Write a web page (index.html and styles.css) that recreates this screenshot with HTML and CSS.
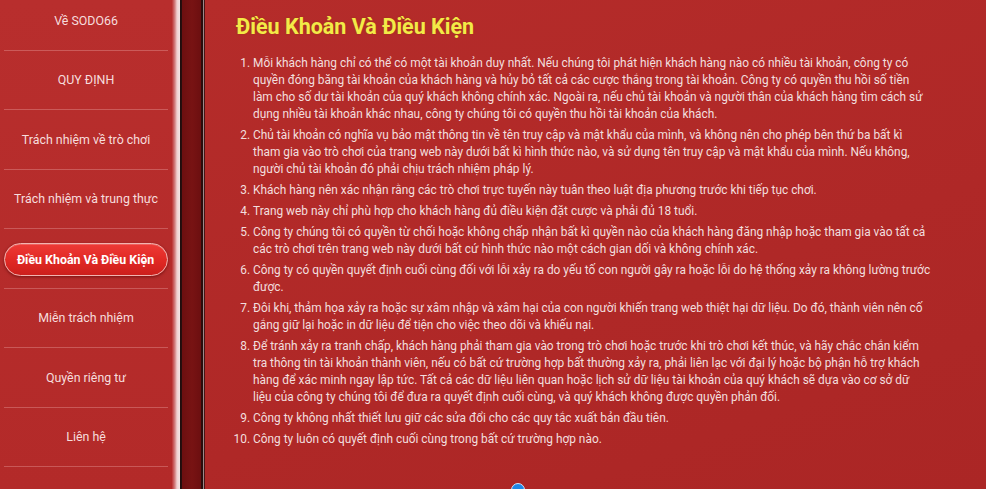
FILE: index.html
```html
<!DOCTYPE html>
<html lang="vi">
<head>
<meta charset="utf-8">
<title>Điều Khoản Và Điều Kiện</title>
<link rel="stylesheet" href="styles.css">
</head>
<body>
<div class="page">
  <nav class="sidebar">
    <ul class="menu">
      <li class="menu-item">Về SODO66</li>
      <li class="menu-item">QUY ĐỊNH</li>
      <li class="menu-item">Trách nhiệm về trò chơi</li>
      <li class="menu-item">Trách nhiệm và trung thực</li>
      <li class="menu-item active"><span class="pill">Điều Khoản Và Điều Kiện</span></li>
      <li class="menu-item">Miễn trách nhiệm</li>
      <li class="menu-item">Quyền riêng tư</li>
      <li class="menu-item">Liên hệ</li>
    </ul>
  </nav>
  <div class="divider"></div>
  <main class="content">
    <h1 class="title">Điều Khoản Và Điều Kiện</h1>
    <ol class="terms">
      <li>Mỗi khách hàng chỉ có thể có một tài khoản duy nhất. Nếu chúng tôi phát hiện khách hàng nào có nhiều tài khoản, công ty có<br>quyền đóng băng tài khoản của khách hàng và hủy bỏ tất cả các cược thắng trong tài khoản. Công ty có quyền thu hồi số tiền<br>làm cho số dư tài khoản của quý khách không chính xác. Ngoài ra, nếu chủ tài khoản và người thân của khách hàng tìm cách sử<br>dụng nhiều tài khoản khác nhau, công ty chúng tôi có quyền thu hồi tài khoản của khách.</li>
      <li>Chủ tài khoản có nghĩa vụ bảo mật thông tin về tên truy cập và mật khẩu của mình, và không nên cho phép bên thứ ba bất kì<br>tham gia vào trò chơi của trang web này dưới bất kì hình thức nào, và sử dụng tên truy cập và mật khẩu của mình. Nếu không,<br>người chủ tài khoản đó phải chịu trách nhiệm pháp lý.</li>
      <li>Khách hàng nên xác nhận rằng các trò chơi trực tuyến này tuân theo luật địa phương trước khi tiếp tục chơi.</li>
      <li>Trang web này chỉ phù hợp cho khách hàng đủ điều kiện đặt cược và phải đủ 18 tuổi.</li>
      <li>Công ty chúng tôi có quyền từ chối hoặc không chấp nhận bất kì quyền nào của khách hàng đăng nhập hoặc tham gia vào tất cả<br>các trò chơi trên trang web này dưới bất cứ hình thức nào một cách gian dối và không chính xác.</li>
      <li>Công ty có quyền quyết định cuối cùng đối với lỗi xảy ra do yếu tố con người gây ra hoặc lỗi do hệ thống xảy ra không lường trước<br>được.</li>
      <li>Đôi khi, thảm họa xảy ra hoặc sự xâm nhập và xâm hại của con người khiến trang web thiệt hại dữ liệu. Do đó, thành viên nên cố<br>gắng giữ lại hoặc in dữ liệu để tiện cho việc theo dõi và khiếu nại.</li>
      <li>Để tránh xảy ra tranh chấp, khách hàng phải tham gia vào trong trò chơi hoặc trước khi trò chơi kết thúc, và hãy chắc chắn kiểm<br>tra thông tin tài khoản thành viên, nếu có bất cứ trường hợp bất thường xảy ra, phải liên lạc với đại lý hoặc bộ phận hỗ trợ khách<br>hàng để xác minh ngay lập tức. Tất cả các dữ liệu liên quan hoặc lịch sử dữ liệu tài khoản của quý khách sẽ dựa vào cơ sở dữ<br>liệu của công ty chúng tôi để đưa ra quyết định cuối cùng, và quý khách không được quyền phản đối.</li>
      <li>Công ty không nhất thiết lưu giữ các sửa đổi cho các quy tắc xuất bản đầu tiên.</li>
      <li>Công ty luôn có quyết định cuối cùng trong bất cứ trường hợp nào.</li>
    </ol>
    <span class="float-dot"></span>
  </main>
</div>
</body>
</html>
```

FILE: styles.css
```css
* { box-sizing: border-box; }
html, body {
  margin: 0;
  padding: 0;
  height: 100%;
  overflow: hidden;
}
body {
  font-family: Roboto, "Liberation Sans", Arial, sans-serif;
  background: #b12828;
}
.page {
  display: flex;
  height: 489px;
}
.sidebar {
  width: 172px;
  flex: none;
  background: linear-gradient(180deg, #b82e2d 0%, #b32a29 100%);
  overflow: hidden;
}
.menu {
  list-style: none;
  margin: -9px 0 0;
  padding: 0 4px 0 4px;
}
.menu-item {
  height: 59.5px;
  display: flex;
  align-items: center;
  justify-content: center;
  color: #f6dddd;
  font-size: 12.4px;
  border-bottom: 1px solid rgba(255, 210, 210, 0.28);
}
.menu-item.active {
  padding-top: 3px;
}
.pill {
  display: flex;
  align-items: center;
  justify-content: center;
  width: 164px;
  height: 33px;
  border-radius: 17px;
  background: linear-gradient(180deg, #ee3a36 0%, #e02823 55%, #cc1f1c 100%);
  border: 1.5px solid #f2b4b0;
  box-shadow: 0 1px 3px rgba(70, 0, 0, 0.55), inset 0 1px 0 rgba(255,255,255,0.2);
  color: #ffffff;
  font-weight: 700;
  font-size: 12.4px;
  margin-left: -1px;
}
.divider {
  width: 33px;
  flex: none;
  background: linear-gradient(90deg,
    #bb3131 0px,
    #d58585 3px,
    #f1d0d0 5px,
    #f3e6e6 8px,
    #1d0d0d 8px,
    #2a0e0e 10px,
    #6c0f10 10px,
    #781313 20px,
    #6c0f10 29px,
    #2a0c0c 29px,
    #2a0c0c 31px,
    #9a8a8a 31px,
    #9a8a8a 32px,
    #4a1414 32px,
    #4a1414 33px);
}
.content {
  flex: 1;
  position: relative;
  padding: 13px 20px 0 31px;
  background: linear-gradient(160deg, #b52c2a 0%, #af2827 60%, #ab2625 100%);
  color: #f2dede;
}
.title {
  margin: 0 0 14px;
  font-size: 21.5px;
  font-weight: 700;
  color: #f3ea47;
  line-height: 28px;
  text-shadow: 0 0 2px rgba(120, 60, 0, 0.4);
}
.terms {
  margin: 0;
  padding: 0 0 0 17px;
  font-size: 11.9px;
  line-height: 17px;
  white-space: nowrap;
}
.terms li {
  margin-bottom: 4px;
}
.float-dot {
  position: absolute;
  left: 306px;
  top: 483px;
  width: 14px;
  height: 14px;
  border-radius: 50%;
  background: #1e88e5;
  border: 1.5px solid #cfe6ff;
}
```
